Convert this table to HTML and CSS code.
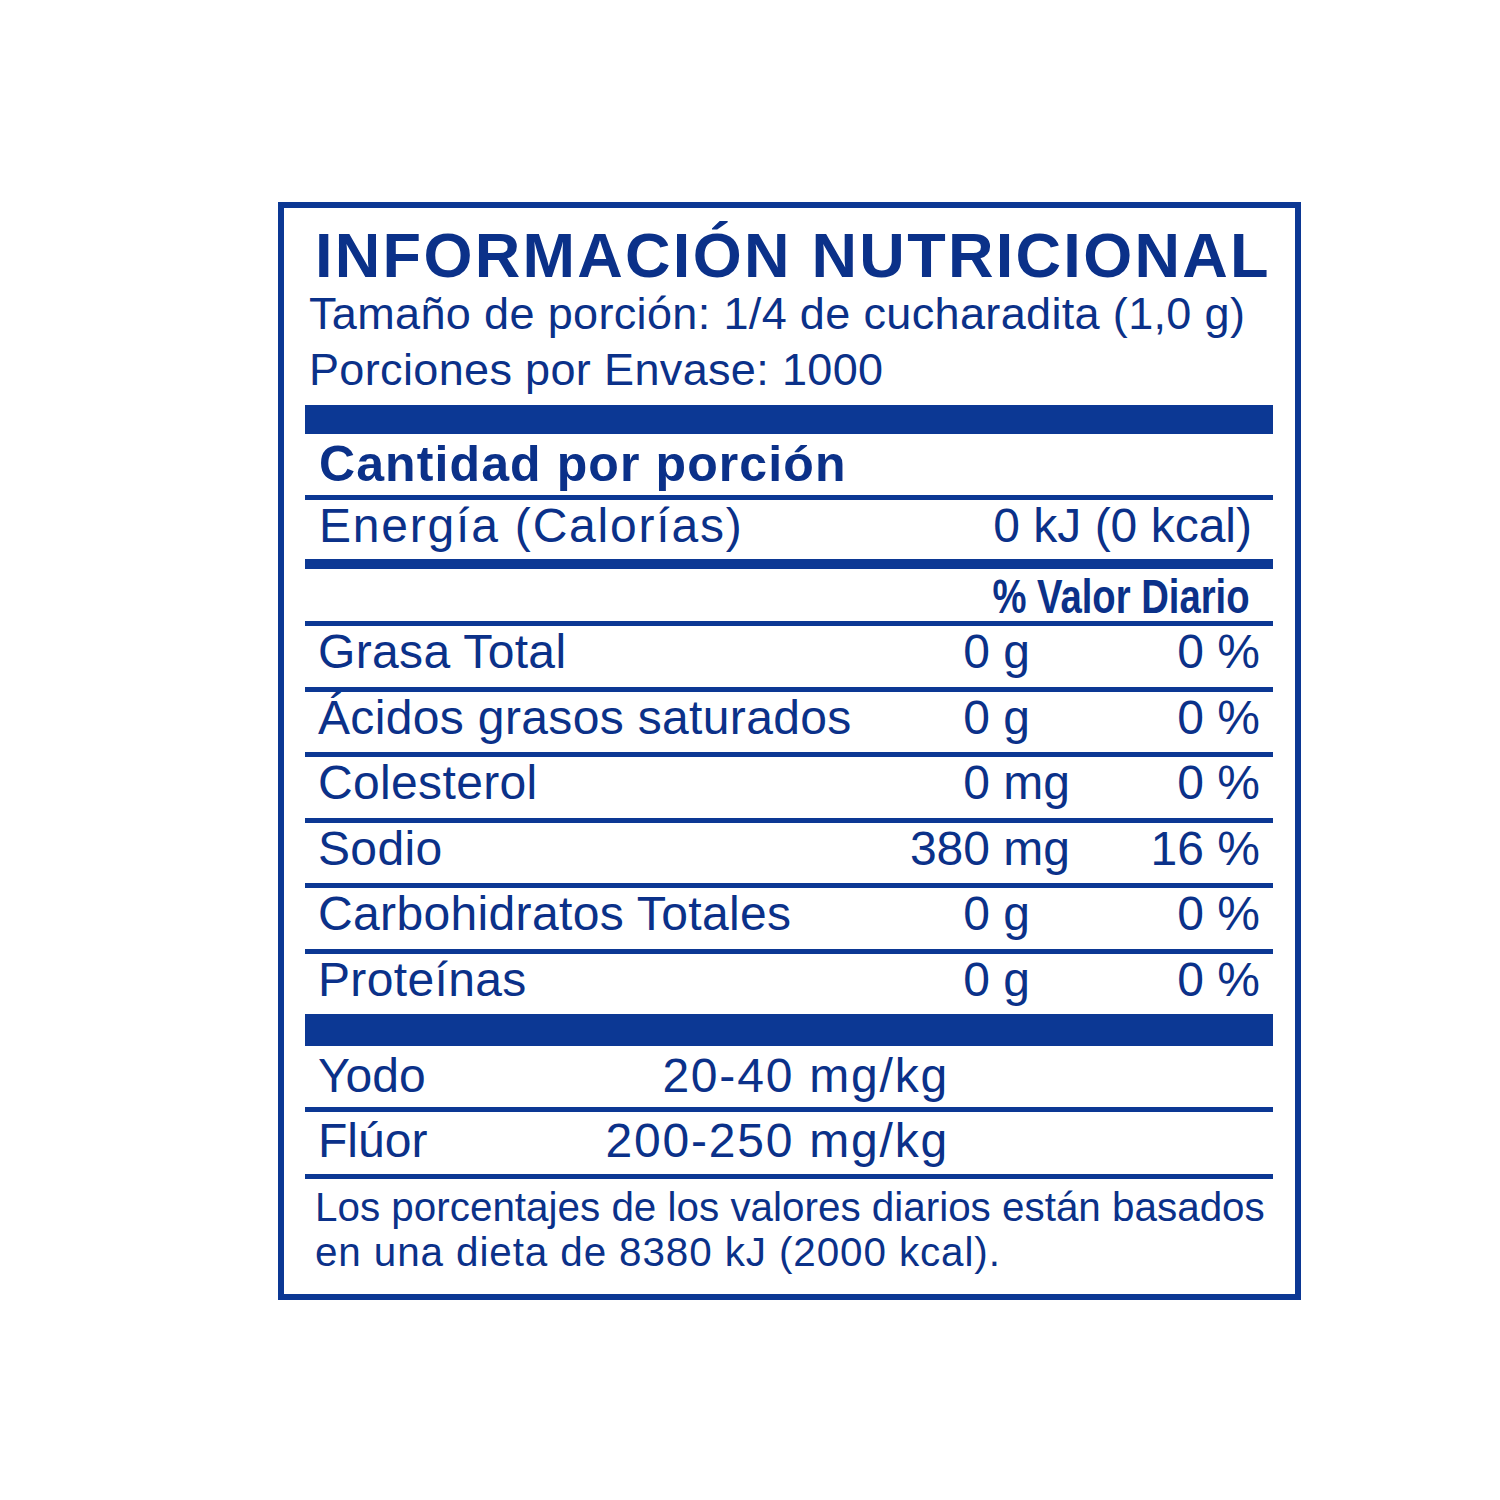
FILE: index.html
```html
<!DOCTYPE html>
<html lang="es">
<head>
<meta charset="utf-8">
<title>Información Nutricional</title>
<link rel="stylesheet" href="styles.css">
</head>
<body>
<div class="label">
  <h1 class="title">INFORMACIÓN NUTRICIONAL</h1>
  <p class="serving">Tamaño de porción: 1/4 de cucharadita (1,0 g)</p>
  <p class="serving">Porciones por Envase: 1000</p>
  <div class="bar bar-top"></div>
  <div class="amount-head">Cantidad por porción</div>
  <div class="energy">
    <span class="energy-name">Energía (Calorías)</span>
    <span class="energy-val">0 kJ (0 kcal)</span>
  </div>
  <div class="dv-head"><span class="dv-text">% Valor Diario</span></div>
  <div class="row"><span class="name">Grasa Total</span><span class="amt"><span class="num">0</span> g</span><span class="pct">0 %</span></div>
  <div class="row"><span class="name">Ácidos grasos saturados</span><span class="amt"><span class="num">0</span> g</span><span class="pct">0 %</span></div>
  <div class="row"><span class="name">Colesterol</span><span class="amt"><span class="num">0</span> mg</span><span class="pct">0 %</span></div>
  <div class="row"><span class="name">Sodio</span><span class="amt"><span class="num">380</span> mg</span><span class="pct">16 %</span></div>
  <div class="row"><span class="name">Carbohidratos Totales</span><span class="amt"><span class="num">0</span> g</span><span class="pct">0 %</span></div>
  <div class="row row-last"><span class="name">Proteínas</span><span class="amt"><span class="num">0</span> g</span><span class="pct">0 %</span></div>
  <div class="bar bar-mid"></div>
  <div class="mineral mineral-first"><span class="mname">Yodo</span><span class="mval">20-40 mg/kg</span></div>
  <div class="mineral mineral-second"><span class="mname">Flúor</span><span class="mval">200-250 mg/kg</span></div>
  <p class="foot">Los porcentajes de los valores diarios están basados<br><span class="foot-2">en una dieta de 8380 kJ (2000 kcal).</span></p>
</div>
</body>
</html>
```

FILE: styles.css
```css
html, body {
  margin: 0;
  padding: 0;
  background: #ffffff;
}

body {
  padding: 202px 0 0 278px;
  font-family: "Liberation Sans", Arial, sans-serif;
  color: #0b3189;
}

.label {
  width: 968px;
  border: 6px solid #0c3894;
  padding: 0 22px 19px 21px;
}

.title {
  margin: 0 0 0 10px;
  padding-top: 16px;
  font-size: 63px;
  line-height: 62px;
  font-weight: 700;
  letter-spacing: 2.3px;
  white-space: nowrap;
}

.serving {
  margin: 0 0 0 4px;
  font-size: 45px;
  line-height: 56px;
  letter-spacing: 0.35px;
  white-space: nowrap;
}

.bar {
  background: #0c3894;
}

.bar-top {
  margin-top: 7px;
  height: 29px;
}

.bar-mid {
  height: 32px;
}

.amount-head {
  padding: 4px 0 5px 14px;
  font-size: 50px;
  line-height: 52px;
  font-weight: 700;
  letter-spacing: 1.1px;
  border-bottom: 5px solid #0c3894;
}

.energy {
  display: flex;
  align-items: flex-start;
  height: 59px;
  padding: 0 21px 0 14px;
  font-size: 48px;
  line-height: 52px;
  white-space: nowrap;
  border-bottom: 10px solid #0c3894;
}

.energy-name {
  letter-spacing: 1.8px;
}

.energy-val {
  margin-left: auto;
}

.dv-head {
  display: flex;
  justify-content: flex-end;
  padding: 2px 23px 0 0;
  height: 50px;
  border-bottom: 5px solid #0c3894;
}

.dv-text {
  display: inline-block;
  font-size: 49px;
  line-height: 50px;
  font-weight: 700;
  white-space: nowrap;
  transform: scaleX(0.78);
  transform-origin: right center;
}

.row {
  display: flex;
  align-items: flex-start;
  height: 60.5px;
  padding: 0 13px;
  font-size: 48px;
  line-height: 52px;
  white-space: nowrap;
  border-bottom: 5px solid #0c3894;
}

.row-last {
  border-bottom: none;
}

.row .name {
  width: 519px;
  letter-spacing: 0.35px;
}

.amt {
  width: 300px;
}

.num {
  display: inline-block;
  width: 153px;
  text-align: right;
}

.pct {
  margin-left: auto;
}

.mineral {
  display: grid;
  grid-template-columns: 230px 401px;
  padding-left: 13px;
  font-size: 48px;
  line-height: 52px;
  white-space: nowrap;
  border-bottom: 5px solid #0c3894;
}

.mineral-first {
  padding-top: 4px;
  padding-bottom: 5px;
}

.mineral-second {
  padding-top: 3px;
  padding-bottom: 7px;
}

.mval {
  text-align: right;
  letter-spacing: 1.8px;
}

.foot {
  margin: 0;
  padding: 6px 0 0 10px;
  font-size: 40.4px;
  line-height: 45px;
  white-space: nowrap;
}

.foot-2 {
  letter-spacing: 0.9px;
}
```
